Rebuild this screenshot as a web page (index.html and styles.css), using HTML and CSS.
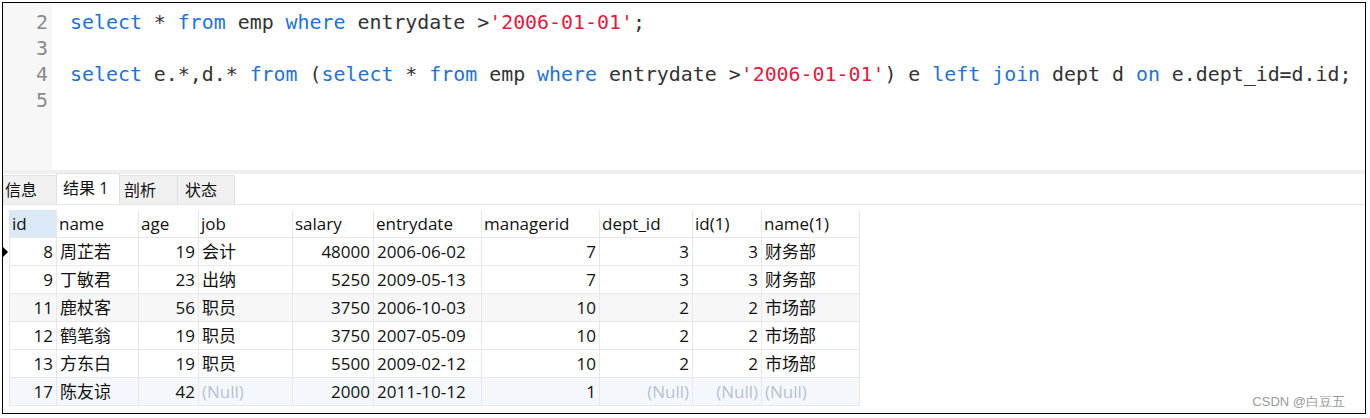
FILE: index.html
```html
<!DOCTYPE html>
<html>
<head>
<meta charset="utf-8">
<link rel="stylesheet" href="styles.css">
</head>
<body>
<div class="frame">
  <div class="editor">
    <div class="gutter">
      <div class="ln ln-top">1</div>
      <div class="ln">2</div>
      <div class="ln">3</div>
      <div class="ln">4</div>
      <div class="ln">5</div>
    </div>
    <div class="code">
      <div class="line line-top"></div>
      <div class="line"><span class="kw">select</span> * <span class="kw">from</span> emp <span class="kw">where</span> entrydate &gt;<span class="str">'2006-01-01'</span>;</div>
      <div class="line"></div>
      <div class="line"><span class="kw">select</span> e.*,d.* <span class="kw">from</span> (<span class="kw">select</span> * <span class="kw">from</span> emp <span class="kw">where</span> entrydate &gt;<span class="str">'2006-01-01'</span>) e <span class="kw">left</span> <span class="kw">join</span> dept d <span class="kw">on</span> e.dept_id=d.id;</div>
      <div class="line"></div>
    </div>
  </div>
  <div class="split"></div>
  <div class="tabs">
    <div class="tab">信息</div>
    <div class="tab active">结果 1</div>
    <div class="tab">剖析</div>
    <div class="tab">状态</div>
  </div>
  <div class="results">
    <div class="grid">
      <div class="ind"></div><div class="h sel">id</div><div class="h">name</div><div class="h">age</div><div class="h">job</div><div class="h">salary</div><div class="h">entrydate</div><div class="h">managerid</div><div class="h">dept_id</div><div class="h">id(1)</div><div class="h">name(1)</div>

      <div class="ind cur"><span class="tri"></span></div><div class="c r">8</div><div class="c">周芷若</div><div class="c r">19</div><div class="c">会计</div><div class="c r">48000</div><div class="c">2006-06-02</div><div class="c r">7</div><div class="c r">3</div><div class="c r">3</div><div class="c">财务部</div>

      <div class="ind"></div><div class="c r">9</div><div class="c">丁敏君</div><div class="c r">23</div><div class="c">出纳</div><div class="c r">5250</div><div class="c">2009-05-13</div><div class="c r">7</div><div class="c r">3</div><div class="c r">3</div><div class="c">财务部</div>

      <div class="ind"></div><div class="c r g">11</div><div class="c g">鹿杖客</div><div class="c r g">56</div><div class="c g">职员</div><div class="c r g">3750</div><div class="c g">2006-10-03</div><div class="c r g">10</div><div class="c r g">2</div><div class="c r g">2</div><div class="c g">市场部</div>

      <div class="ind"></div><div class="c r">12</div><div class="c">鹤笔翁</div><div class="c r">19</div><div class="c">职员</div><div class="c r">3750</div><div class="c">2007-05-09</div><div class="c r">10</div><div class="c r">2</div><div class="c r">2</div><div class="c">市场部</div>

      <div class="ind"></div><div class="c r">13</div><div class="c">方东白</div><div class="c r">19</div><div class="c">职员</div><div class="c r">5500</div><div class="c">2009-02-12</div><div class="c r">10</div><div class="c r">2</div><div class="c r">2</div><div class="c">市场部</div>

      <div class="ind"></div><div class="c r b">17</div><div class="c b">陈友谅</div><div class="c r b">42</div><div class="c b null">(Null)</div><div class="c r b">2000</div><div class="c b">2011-10-12</div><div class="c r b">1</div><div class="c r b null">(Null)</div><div class="c r b null">(Null)</div><div class="c b null">(Null)</div>
    </div>
    <div class="watermark">CSDN @白豆五</div>
  </div>
</div>
</body>
</html>
```
FILE: styles.css
```css
html, body {
  margin: 0;
  padding: 0;
  background: #ffffff;
}
body {
  width: 1370px;
  height: 418px;
  overflow: hidden;
}
.frame {
  margin: 2px 0 0 2px;
  width: 1362px;
  height: 410px;
  border: 1px solid #000;
  display: flex;
  flex-direction: column;
  overflow: hidden;
  background: #fff;
}
.editor {
  height: 167px;
  display: flex;
  flex: none;
  overflow: hidden;
}
.gutter {
  width: 49px;
  background: #f7f7f7;
  flex: none;
  margin-top: -19px;
}
.ln {
  height: 26px;
  line-height: 26px;
  text-align: right;
  padding-right: 4px;
  font-family: "DejaVu Sans Mono", monospace;
  font-size: 19.9px;
  color: #8a8a8a;
}
.code {
  margin-top: -19px;
  padding-left: 18px;
  flex: 1;
}
.line {
  height: 26px;
  line-height: 26px;
  white-space: pre;
  font-family: "DejaVu Sans Mono", monospace;
  font-size: 19.9px;
  color: #333333;
}
.kw { color: #1d72e0; }
.str { color: #e5193f; }
.split {
  height: 4px;
  background: #efefef;
  flex: none;
}
.tabs {
  display: flex;
  height: 30px;
  flex: none;
  border-bottom: 1px solid #e6e6e6;
  align-items: flex-end;
  font-family: "Open Sans", "Noto Sans CJK SC", sans-serif;
  font-size: 16px;
  color: #111;
}
.tab {
  line-height: 28px;
  background: #f0f0f0;
  border: 1px solid #e2e2e2;
  border-bottom: none;
  padding: 0 10px 0 1px;
  margin-right: -1px;
  box-sizing: border-box;
  height: 29px;
  white-space: nowrap;
}
.tab:nth-child(1) { width: 54px; }
.tab.active {
  background: #fff;
  height: 31px;
  line-height: 29px;
  width: 64px;
  padding-left: 6px;
}
.tab:nth-child(3) { width: 59px; padding-left: 4px; }
.tab:nth-child(4) { width: 58px; padding-left: 7px; }
.results {
  flex: 1;
  position: relative;
  padding-top: 5px;
}
.grid {
  display: grid;
  grid-template-columns: 7px 47px 82px 60px 94px 81px 108px 118px 93px 69px 98px;
  grid-auto-rows: 28px;
  width: max-content;
  font-family: "Open Sans", "Noto Sans CJK SC", sans-serif;
  font-size: 17px;
  color: #111;
}
.ind {
  background: #fff;
  border-right: 1px solid #e4e4e4;
  position: relative;
}
.tri {
  position: absolute;
  left: 0;
  top: 9px;
  width: 0;
  height: 0;
  border-top: 5px solid transparent;
  border-bottom: 5px solid transparent;
  border-left: 5px solid #000;
}
.h, .c {
  box-sizing: border-box;
  border-right: 1px solid #e8e8e8;
  border-bottom: 1px solid #e8e8e8;
  padding: 0 3px;
  line-height: 27px;
  white-space: nowrap;
  overflow: hidden;
}
.h { background: #fff; padding-left: 2px; }
.h.sel { background: #dbe9f7; }
.r { text-align: right; }
.g { background: #f7f7f7; }
.b { background: #f4f8fd; }
.null { color: #b9c0d6; }
.watermark {
  position: absolute;
  right: 20px;
  bottom: 2px;
  font-family: "Liberation Sans", sans-serif;
  font-size: 13px;
  color: #9a9a9a;
}
```
